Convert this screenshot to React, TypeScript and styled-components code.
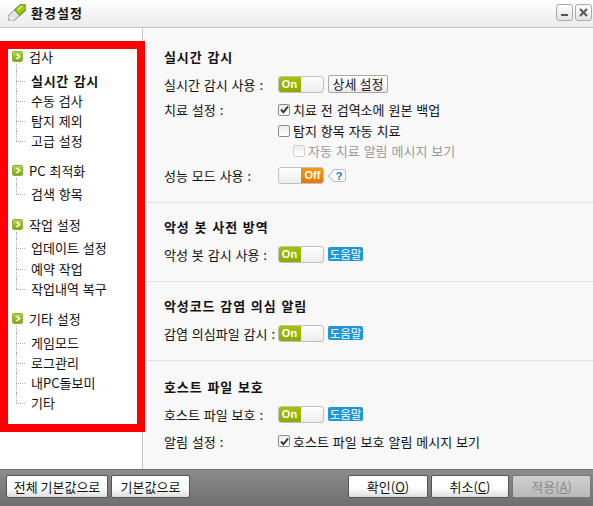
import React from "react";
import styled, { createGlobalStyle } from "styled-components";

const Global = createGlobalStyle`
  html, body { margin: 0; padding: 0; background: #f8f8f8; }
  body { font-family: "Noto Sans CJK KR", "Liberation Sans", sans-serif; font-size: 13px; word-spacing: 1px; color: #111; }
`;

const Window = styled.div`
  position: relative;
  width: 593px;
  height: 506px;
  display: flex;
  flex-direction: column;
  overflow: hidden;
`;

const TitleBar = styled.header`
  height: 28px;
  flex: none;
  box-sizing: border-box;
  display: flex;
  align-items: center;
  padding: 0 1px 2px 8px;
  border-bottom: 1px solid #c4c4c4;
  background: linear-gradient(#ffffff, #ebebeb);
`;

const Title = styled.h1`
  margin: 0 0 0 5px;
  font-size: 13px;
  line-height: 18px;
  font-weight: 700;
  letter-spacing: 1px;
  flex: 1;
`;

const WinButton = styled.button`
  width: 17px;
  height: 17px;
  padding: 0;
  margin-left: 2px;
  display: flex;
  align-items: center;
  justify-content: center;
  border: 1px solid #a9a9a9;
  border-radius: 3px;
  background: linear-gradient(#ffffff, #e4e4e4);
`;

const Body = styled.div`
  flex: 1;
  min-height: 0;
  display: flex;
`;

const Sidebar = styled.nav`
  width: 143px;
  flex: none;
  box-sizing: border-box;
  background: #fff;
  border-right: 1px solid #c8c8c8;
  padding: 18px 0 0 12px;
`;

const Group = styled.div<{ $gap: number }>`
  margin-bottom: ${(p) => p.$gap}px;
`;

const GroupHead = styled.div`
  display: flex;
  align-items: center;
  height: 20px;
  gap: 6px;
`;

const GroupIcon = styled.span`
  width: 11px;
  height: 11px;
  flex: none;
  box-sizing: border-box;
  display: flex;
  align-items: center;
  justify-content: center;
  border-radius: 2px;
  background: linear-gradient(#b6d64a, #7fa81c);
  border: 1px solid #8cae2e;
`;

const Tree = styled.ul<{ $top: number }>`
  position: relative;
  list-style: none;
  margin: 0 0 0 4px;
  padding: ${(p) => p.$top}px 0 0;
  &::before {
    content: "";
    position: absolute;
    left: 0;
    top: -2px;
    height: ${(p) => p.$top + 2}px;
    border-left: 1px dotted #b0b0b0;
  }
`;

const TreeItem = styled.li<{ $active?: boolean; $h?: number }>`
  height: ${(p) => p.$h ?? 20}px;
  line-height: ${(p) => p.$h ?? 20}px;
  padding-left: 15px;
  white-space: nowrap;
  font-weight: ${(p) => (p.$active ? 700 : 400)};
  letter-spacing: ${(p) => (p.$active ? "0.7px" : "0")};
  position: relative;
  &::before {
    content: "";
    position: absolute;
    left: 0;
    top: 50%;
    width: 9px;
    border-top: 1px dotted #b0b0b0;
  }
  &::after {
    content: "";
    position: absolute;
    left: 0;
    top: 0;
    bottom: 0;
    border-left: 1px dotted #b0b0b0;
  }
  &:last-child::after {
    bottom: 50%;
  }
`;

const Annotation = styled.div`
  position: absolute;
  left: 0;
  top: 41px;
  width: 145px;
  height: 391px;
  box-sizing: border-box;
  border: 8px solid #ff0000;
  pointer-events: none;
`;

const Main = styled.main`
  flex: 1;
  display: flex;
  flex-direction: column;
  background: #f8f8f8;
`;

const Section = styled.section<{ $h: number; $pad: number; $last?: boolean }>`
  height: ${(p) => p.$h}px;
  flex: none;
  box-sizing: border-box;
  padding: ${(p) => p.$pad}px 0 0 21px;
  border-bottom: ${(p) => (p.$last ? "none" : "1px solid #e2e2e2")};
`;

const SectionTitle = styled.h2`
  margin: 0 0 3px;
  font-size: 13px;
  line-height: 18px;
  font-weight: 700;
  letter-spacing: 0.9px;
`;

const Row = styled.div<{ $h?: number }>`
  display: flex;
  align-items: center;
  height: ${(p) => p.$h ?? 21}px;
  white-space: nowrap;
`;

const Label = styled.span`
  width: 114px;
  flex: none;
`;

const Controls = styled.div`
  display: flex;
  align-items: center;
  gap: 4px;
`;

const Toggle = styled.span<{ $on: boolean }>`
  width: 46px;
  height: 17px;
  box-sizing: border-box;
  display: flex;
  flex-direction: ${(p) => (p.$on ? "row" : "row-reverse")};
  background: linear-gradient(#ffffff, #ececec);
  border: 1px solid #c0c0c0;
  border-radius: 3px;
  overflow: hidden;
`;

const ToggleKnob = styled.span<{ $on: boolean }>`
  width: 23px;
  margin: -1px;
  text-align: center;
  font-family: "Liberation Sans", sans-serif;
  font-size: 11px;
  font-weight: 700;
  line-height: 17px;
  color: #fff;
  border-radius: ${(p) => (p.$on ? "2px 0 0 2px" : "0 2px 2px 0")};
  background: ${(p) =>
    p.$on ? "linear-gradient(#a9c400, #8aa800)" : "linear-gradient(#f39a14, #e07800)"};
`;

const SmallButton = styled.button`
  width: 60px;
  height: 18px;
  padding: 0;
  font: inherit;
  line-height: 14px;
  color: #111;
  border: 1px solid #a8a8a8;
  border-radius: 2px;
  background: linear-gradient(#ffffff 50%, #e6e6e6);
`;

const HelpBadge = styled.span`
  width: 35px;
  height: 14px;
  display: flex;
  align-items: center;
  justify-content: center;
  font-size: 11.5px;
  word-spacing: 0;
  color: #fff;
  border-radius: 2px;
  background: #1e96dc;
`;

const QuestionBadge = styled.span`
  position: relative;
  width: 14px;
  height: 13px;
  box-sizing: border-box;
  margin-left: 4px;
  display: flex;
  align-items: center;
  justify-content: center;
  font-family: "Liberation Sans", sans-serif;
  font-size: 11px;
  font-weight: 700;
  color: #0a7fd0;
  background: #fff;
  border: 1px solid #bdbdbd;
  border-radius: 2px;
  &::before {
    content: "";
    position: absolute;
    left: -4px;
    top: 3px;
    width: 5px;
    height: 5px;
    background: #fff;
    border-left: 1px solid #bdbdbd;
    border-bottom: 1px solid #bdbdbd;
    transform: rotate(45deg);
  }
`;

const CheckRow = styled.label<{ $disabled?: boolean; $indent?: number }>`
  display: flex;
  align-items: center;
  gap: 3px;
  margin-left: ${(p) => p.$indent ?? 0}px;
  color: ${(p) => (p.$disabled ? "#9a9a9a" : "#111")};
`;

const Box = styled.span<{ $disabled?: boolean }>`
  width: 12px;
  height: 12px;
  box-sizing: border-box;
  flex: none;
  display: flex;
  align-items: center;
  justify-content: center;
  background: linear-gradient(#ececec, #ffffff);
  border: 1px solid ${(p) => (p.$disabled ? "#cfcfcf" : "#8e8e8e")};
  border-radius: 2px;
`;

const Footer = styled.footer`
  height: 37px;
  flex: none;
  box-sizing: border-box;
  display: flex;
  align-items: flex-start;
  justify-content: space-between;
  padding: 5px 2px 0 6px;
  border-top: 1px solid #6e6e6e;
  background: linear-gradient(#8c8c8c, #6f6f6f);
`;

const ButtonGroup = styled.div`
  display: flex;
  gap: 3px;
`;

const FooterButton = styled.button<{ $w: number }>`
  width: ${(p) => p.$w}px;
  height: 23px;
  padding: 0 0 1px;
  font: inherit;
  line-height: 19px;
  color: #111;
  border: 1px solid #555;
  border-radius: 2px;
  background: linear-gradient(#ffffff 55%, #dedede);
  &:disabled {
    color: #8a8a8a;
    border-color: #777;
    background: linear-gradient(#cfcfcf, #b9b9b9);
  }
`;

const Pill = () => (
  <svg width="18" height="17" viewBox="0 0 18 17">
    <g transform="rotate(-42 9 8.5)">
      <rect x="-2" y="5" width="22" height="7.5" rx="3.75" fill="#e4e4e4" stroke="#9a9a9a" />
      <path d="M9 5h7.2a3.75 3.75 0 0 1 0 7.5H9z" fill="#9cc81e" stroke="#6f9410" />
      <rect x="11" y="6.2" width="6" height="1.6" rx="0.8" fill="#d8ee80" />
    </g>
  </svg>
);

const Check = () => (
  <svg width="9" height="9" viewBox="0 0 9 9">
    <path d="M1 4.5 3.4 7.3 8 1.5" fill="none" stroke="#333" strokeWidth="2" />
  </svg>
);

const Chevron = () => (
  <svg width="6" height="7" viewBox="0 0 6 7">
    <path d="M1.5 1 4.5 3.5 1.5 6" fill="none" stroke="#fff" strokeWidth="1.6" />
  </svg>
);

const Switch = ({ on }: { on: boolean }) => (
  <Toggle $on={on}>
    <ToggleKnob $on={on}>{on ? "On" : "Off"}</ToggleKnob>
  </Toggle>
);

const nav = [
  { title: "검사", top: 5, gap: 9, items: [["실시간 감시", 20, true], ["수동 검사", 20], ["탐지 제외", 20], ["고급 설정", 20]] },
  { title: "PC 최적화", top: 4, gap: 10, items: [["검색 항목", 20]] },
  { title: "작업 설정", top: 4, gap: 9, items: [["업데이트 설정", 20], ["예약 작업", 21], ["작업내역 복구", 20]] },
  { title: "기타 설정", top: 5, gap: 0, items: [["게임모드", 20], ["로그관리", 20], ["내PC돌보미", 20], ["기타", 20]] },
] as { title: string; top: number; gap: number; items: [string, number, boolean?][] }[];

export default function App() {
  return (
    <Window>
      <Global />
      <TitleBar>
        <Pill />
        <Title>환경설정</Title>
        <WinButton aria-label="minimize">
          <svg width="9" height="9" viewBox="0 0 9 9"><rect x="1" y="6" width="7" height="2" fill="#555" /></svg>
        </WinButton>
        <WinButton aria-label="close">
          <svg width="9" height="9" viewBox="0 0 9 9"><path d="M1 1 8 8M8 1 1 8" stroke="#555" strokeWidth="2" /></svg>
        </WinButton>
      </TitleBar>
      <Body>
        <Sidebar>
          {nav.map((g) => (
            <Group key={g.title} $gap={g.gap}>
              <GroupHead>
                <GroupIcon><Chevron /></GroupIcon>
                {g.title}
              </GroupHead>
              <Tree $top={g.top}>
                {g.items.map(([label, h, active]) => (
                  <TreeItem key={label} $h={h} $active={active}>{label}</TreeItem>
                ))}
              </Tree>
            </Group>
          ))}
        </Sidebar>
        <Main>
          <Section $h={175} $pad={20}>
            <SectionTitle>실시간 감시</SectionTitle>
            <Row $h={30}>
              <Label>실시간 감시 사용 :</Label>
              <Controls><Switch on /><SmallButton>상세 설정</SmallButton></Controls>
            </Row>
            <Row>
              <Label>치료 설정 :</Label>
              <CheckRow><Box><Check /></Box>치료 전 검역소에 원본 백업</CheckRow>
            </Row>
            <Row>
              <Label />
              <CheckRow><Box />탐지 항목 자동 치료</CheckRow>
            </Row>
            <Row $h={19}>
              <Label />
              <CheckRow $disabled $indent={15}><Box $disabled />자동 치료 알림 메시지 보기</CheckRow>
            </Row>
            <Row $h={31}>
              <Label>성능 모드 사용 :</Label>
              <Controls><Switch on={false} /><QuestionBadge>?</QuestionBadge></Controls>
            </Row>
          </Section>
          <Section $h={79} $pad={15}>
            <SectionTitle>악성 봇 사전 방역</SectionTitle>
            <Row $h={30}>
              <Label>악성 봇 감시 사용 :</Label>
              <Controls><Switch on /><HelpBadge>도움말</HelpBadge></Controls>
            </Row>
          </Section>
          <Section $h={79} $pad={15}>
            <SectionTitle>악성코드 감염 의심 알림</SectionTitle>
            <Row $h={30}>
              <Label>감염 의심파일 감시 :</Label>
              <Controls><Switch on /><HelpBadge>도움말</HelpBadge></Controls>
            </Row>
          </Section>
          <Section $h={107} $pad={17} $last>
            <SectionTitle>호스트 파일 보호</SectionTitle>
            <Row $h={30}>
              <Label>호스트 파일 보호 :</Label>
              <Controls><Switch on /><HelpBadge>도움말</HelpBadge></Controls>
            </Row>
            <Row $h={24}>
              <Label>알림 설정 :</Label>
              <CheckRow><Box><Check /></Box>호스트 파일 보호 알림 메시지 보기</CheckRow>
            </Row>
          </Section>
        </Main>
      </Body>
      <Footer>
        <ButtonGroup>
          <FooterButton $w={102}>전체 기본값으로</FooterButton>
          <FooterButton $w={79}>기본값으로</FooterButton>
        </ButtonGroup>
        <ButtonGroup>
          <FooterButton $w={80}>확인(<u>O</u>)</FooterButton>
          <FooterButton $w={78}>취소(<u>C</u>)</FooterButton>
          <FooterButton $w={79} disabled>적용(<u>A</u>)</FooterButton>
        </ButtonGroup>
      </Footer>
      <Annotation />
    </Window>
  );
}
